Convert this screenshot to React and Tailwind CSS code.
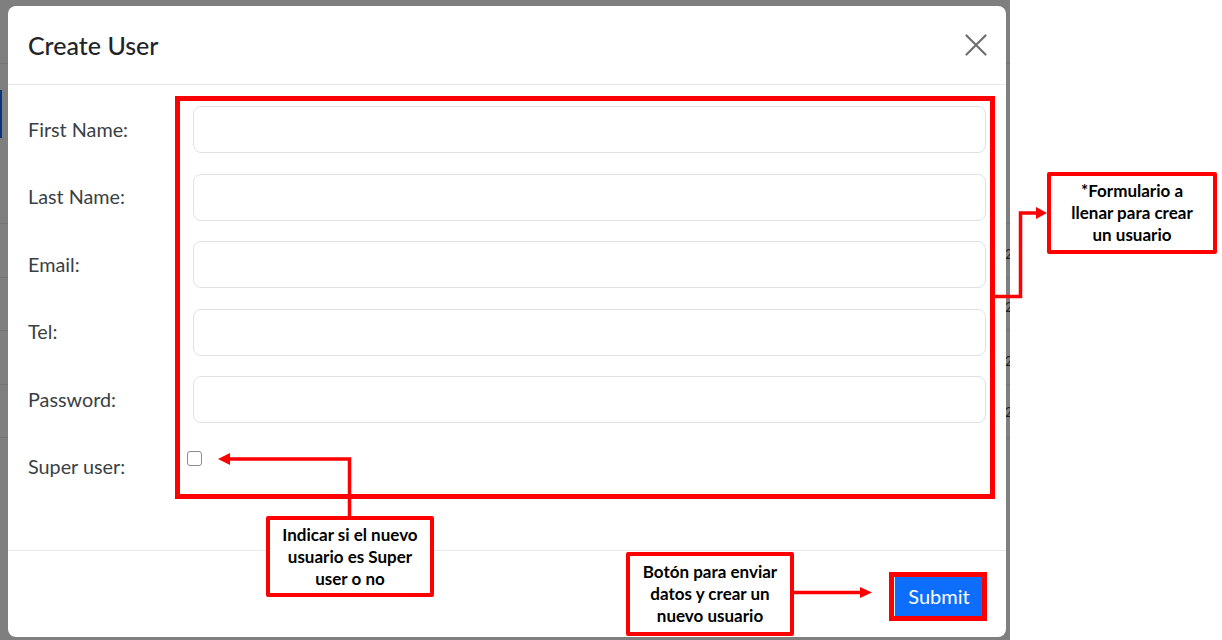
import React from "react";

const fields = ["First Name:", "Last Name:", "Email:", "Tel:", "Password:"];

// líneas de la tabla que queda detrás del modal
const tableLines = [63, 223, 277, 330, 384, 437];
const tableDigits = [248, 301, 355, 406];

const Note = ({ className, children }) => (
  <div
    className={`absolute flex items-center justify-center border-[4px] border-[#ff0000] rounded-[2px] bg-white text-center text-[17px] leading-[22px] font-bold text-black ${className}`}
    style={{ fontFamily: "Lato, 'Liberation Sans', sans-serif" }}
  >
    {children}
  </div>
);

const App = () => {
  return (
    <div
      className="relative w-[1222px] h-[640px] bg-white overflow-hidden"
      style={{ fontFamily: "Lato, 'Noto Sans', sans-serif" }}
    >
      {/* fondo oscurecido */}
      <div className="relative w-[1010px] h-[640px] bg-[#7f7f7f] pl-[8px] pt-[6px] overflow-hidden">
        {tableLines.map((y) => (
          <div key={y} className="absolute left-0 right-0 h-px bg-[#747474]" style={{ top: y }} />
        ))}
        <div className="absolute left-0 top-[90px] w-[2px] h-[48px] bg-[#08367e]" />
        {tableDigits.map((y) => (
          <span key={y} className="absolute left-[1005px] text-[13px] leading-none text-[#1a1a1a]" style={{ top: y }}>
            2
          </span>
        ))}

        {/* modal */}
        <div className="relative w-[998px] h-[631px] bg-white rounded-[8px] flex flex-col overflow-hidden text-[#212529]">
          <div className="h-[79px] shrink-0 px-[20px] flex items-center justify-between border-b border-[#e6e8eb]">
            <h5 className="text-[25px] font-medium leading-none">Create User</h5>
            <svg width="22" height="22" viewBox="0 0 22 22" className="mr-[-1px]">
              <path d="M1.5 1.5 L20.5 20.5 M20.5 1.5 L1.5 20.5" stroke="#6f6f6f" strokeWidth="2.2" strokeLinecap="round" />
            </svg>
          </div>

          <div className="flex-1 px-[20px] pt-[21px] flex flex-col gap-[20.5px]">
            {fields.map((label) => (
              <div key={label} className="grid grid-cols-[165px_1fr] items-center h-[47px]">
                <label className="text-[19.8px] text-[#3a3f44]">{label}</label>
                <input
                  type={label === "Password:" ? "password" : "text"}
                  className="h-[47px] w-full rounded-[8px] border border-[#dee2e6] bg-white px-3 outline-none"
                />
              </div>
            ))}
            <div className="grid grid-cols-[165px_1fr] h-[47px]">
              <label className="self-center text-[19.8px] text-[#3a3f44]">Super user:</label>
              <div className="pt-[7.5px] ml-[-6px]">
                <div className="w-[15px] h-[15px] rounded-[3px] border border-[#8a8d90] bg-white" />
              </div>
            </div>
          </div>

          <div className="h-[87px] shrink-0 border-t border-[#e6e8eb] flex items-start justify-end pt-[25px] pr-[23px]">
            <button className="w-[88px] h-[40px] bg-[#0d6efd] text-white text-[20px] leading-none">Submit</button>
          </div>
        </div>
      </div>

      {/* anotaciones */}
      <svg className="absolute inset-0 pointer-events-none" width="1222" height="640">
        <rect x="177.5" y="98.5" width="815" height="398" fill="none" stroke="#ff0000" strokeWidth="5" />
        <rect x="891.5" y="574.5" width="93" height="44" fill="none" stroke="#ff0000" strokeWidth="5" />

        <polyline points="995,296.5 1020.5,296.5 1020.5,213 1038,213" fill="none" stroke="#ff0000" strokeWidth="3.5" />
        <polygon points="1036,207 1047,213 1036,219" fill="#ff0000" />

        <polyline points="228,459 349.5,459 349.5,516" fill="none" stroke="#ff0000" strokeWidth="3.5" />
        <polygon points="218,459 230,453 230,465" fill="#ff0000" />

        <polyline points="794,592.5 862,592.5" fill="none" stroke="#ff0000" strokeWidth="3.5" />
        <polygon points="860,587 872,592.5 860,598" fill="#ff0000" />
      </svg>

      <Note className="left-[1047px] top-[172px] w-[170px] h-[82px]">
        *Formulario a<br />llenar para crear<br />un usuario
      </Note>
      <Note className="left-[266px] top-[516px] w-[168px] h-[81px]">
        Indicar si el nuevo<br />usuario es Super<br />user o no
      </Note>
      <Note className="left-[626px] top-[552px] w-[168px] h-[84px]">
        Botón para enviar<br />datos y crear un<br />nuevo usuario
      </Note>
    </div>
  );
};

export default App;
